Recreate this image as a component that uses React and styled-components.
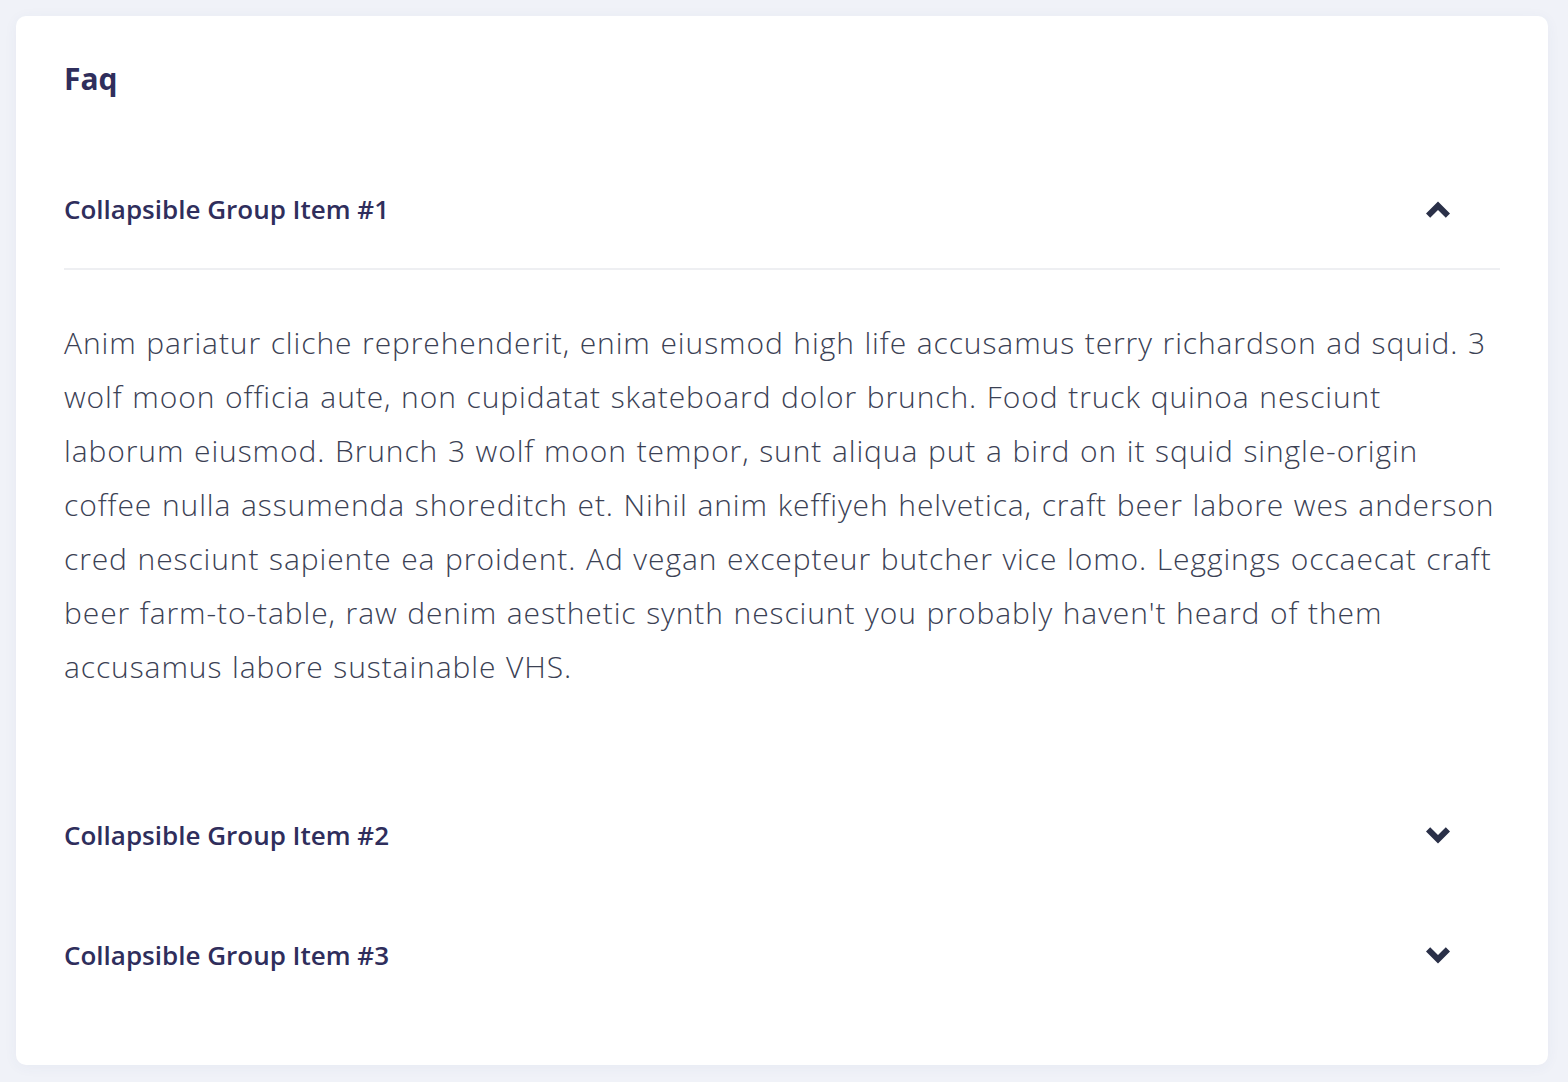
import { useState } from "react";
import styled, { createGlobalStyle } from "styled-components";

const items = [
  {
    id: 1,
    title: "Collapsible Group Item #1",
    body:
      "Anim pariatur cliche reprehenderit, enim eiusmod high life accusamus terry richardson ad squid. 3 wolf moon officia aute, non cupidatat skateboard dolor brunch. Food truck quinoa nesciunt laborum eiusmod. Brunch 3 wolf moon tempor, sunt aliqua put a bird on it squid single-origin coffee nulla assumenda shoreditch et. Nihil anim keffiyeh helvetica, craft beer labore wes anderson cred nesciunt sapiente ea proident. Ad vegan excepteur butcher vice lomo. Leggings occaecat craft beer farm-to-table, raw denim aesthetic synth nesciunt you probably haven't heard of them accusamus labore sustainable VHS.",
  },
  {
    id: 2,
    title: "Collapsible Group Item #2",
    body:
      "Anim pariatur cliche reprehenderit, enim eiusmod high life accusamus terry richardson ad squid. 3 wolf moon officia aute, non cupidatat skateboard dolor brunch.",
  },
  {
    id: 3,
    title: "Collapsible Group Item #3",
    body:
      "Food truck quinoa nesciunt laborum eiusmod. Brunch 3 wolf moon tempor, sunt aliqua put a bird on it squid single-origin coffee nulla assumenda shoreditch et.",
  },
];

// thick solid chevron, like the font-awesome one
function Chevron({ up }) {
  return (
    <ChevronSvg viewBox="0 0 24 17" $up={up}>
      <path d="M12 0.5 L24 12.5 L19.8 16.7 L12 8.9 L4.2 16.7 L0 12.5 Z" />
    </ChevronSvg>
  );
}

export default function App() {
  const [open, setOpen] = useState(1);

  return (
    <>
      <GlobalStyle />
      <Card>
        <Title>Faq</Title>
        {items.map((item) => {
          const isOpen = open === item.id;
          return (
            <div key={item.id}>
              <Header $open={isOpen} onClick={() => setOpen(isOpen ? null : item.id)}>
                <HeaderText>{item.title}</HeaderText>
                <Chevron up={isOpen} />
              </Header>
              {isOpen && <Body>{item.body}</Body>}
            </div>
          );
        })}
      </Card>
    </>
  );
}

const GlobalStyle = createGlobalStyle`
  html, body {
    margin: 0;
    background: #f0f2f8;
  }
  body {
    padding: 16px 20px 18px 16px;
    font-family: "Open Sans", "Noto Sans", sans-serif;
  }
`;

const Card = styled.div`
  background: #ffffff;
  border-radius: 10px;
  box-shadow: 0 2px 14px rgba(60, 70, 140, 0.05);
  padding: 44px 48px 49px;
`;

const Title = styled.h2`
  margin: 0 0 52px;
  font-size: 30px;
  line-height: 38px;
  font-weight: 700;
  color: #2f2e5c;
`;

const Header = styled.div`
  display: flex;
  align-items: center;
  justify-content: space-between;
  padding: 42px 50px 42px 0;
  border-bottom: 2px solid ${(p) => (p.$open ? "#eeeff2" : "transparent")};
  cursor: pointer;
`;

const HeaderText = styled.span`
  font-size: 26px;
  line-height: 34px;
  font-weight: 600;
  color: #2f2e5c;
`;

const ChevronSvg = styled.svg`
  width: 24px;
  height: 17px;
  fill: #2a3048;
  transform: ${(p) => (p.$up ? "none" : "rotate(180deg)")};
`;

const Body = styled.p`
  margin: 0;
  padding: 46px 0 82px;
  font-size: 30px;
  line-height: 54px;
  font-weight: 300;
  letter-spacing: 0.9px;
  word-spacing: 1px;
  color: #3b4154;
`;
